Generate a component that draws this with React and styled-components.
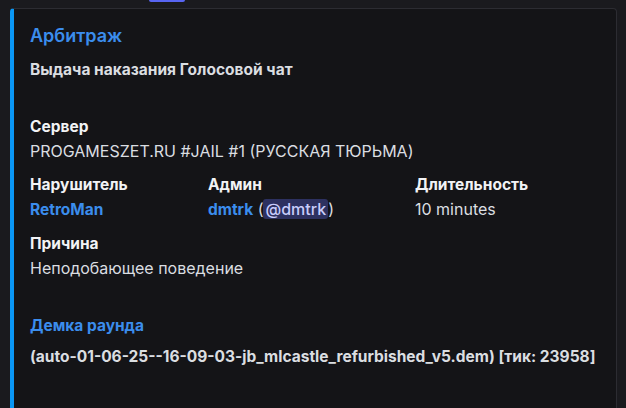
import React from 'react';
import styled, { createGlobalStyle } from 'styled-components';

const GlobalStyle = createGlobalStyle`
  html, body {
    margin: 0;
    padding: 0;
    background-color: #1a1a1e;
    overflow: hidden;
  }
  body {
    font-family: Inter, "Noto Sans", sans-serif;
    -webkit-font-smoothing: antialiased;
  }
`;

const Page = styled.div`
  width: 626px;
  height: 408px;
  background-color: #1a1a1e;
  overflow: hidden;
`;

// кусочек кнопки из предыдущего сообщения, торчит сверху
const TopStrip = styled.div`
  height: 8px;
  display: flex;
`;

const PrevButtonEdge = styled.div`
  margin-left: 149px;
  width: 36px;
  height: 2px;
  border-radius: 0 0 2px 2px;
  background-color: #5865f2;
`;

const Embed = styled.div`
  margin-left: 10px;
  width: 607px;
  height: 420px;
  background-color: #141417;
  border: 1px solid #2c2c32;
  border-left: 4px solid ${({ $accent }) => $accent};
  border-radius: 4px;
  padding: 15px 16px 0 16px;
  box-sizing: border-box;
`;

const Title = styled.div`
  font-size: 18px;
  font-weight: 600;
  line-height: 24px;
  color: #3b8ded;
`;

const Description = styled.div`
  margin-top: 10px;
  font-size: 15.5px;
  font-weight: 700;
  line-height: 24px;
  color: #dbdee1;
`;

const Fields = styled.div`
  margin-top: 33px;
  display: grid;
  grid-template-columns: 178px 207px 1fr;
  row-gap: 10px;
`;

const Field = styled.div`
  grid-column: ${({ $full }) => ($full ? '1 / -1' : 'auto')};
  min-width: 0;
`;

const FieldName = styled.div`
  font-size: 15.5px;
  font-weight: 700;
  line-height: 24px;
  color: #f2f3f5;
`;

const FieldValue = styled.div`
  font-size: 16px;
  font-weight: 400;
  line-height: 24px;
  color: #dbdee1;
  white-space: nowrap;
`;

const Link = styled.span`
  color: #3b8ded;
  font-weight: 700;
  font-size: 15.5px;
`;

const Mention = styled.span`
  background-color: #2d3160;
  color: #c9cdfb;
  border-radius: 3px;
  padding: 0 2px;
  font-weight: 500;
`;

const Demo = styled.div`
  margin-top: 34px;
`;

const DemoTitle = styled.div`
  font-size: 15.5px;
  font-weight: 700;
  line-height: 24px;
  color: #3b8ded;
`;

const DemoFile = styled.div`
  margin-top: 7px;
  font-size: 15.5px;
  font-weight: 700;
  line-height: 24px;
  color: #dbdee1;
  white-space: nowrap;
`;

export default function App() {
  return (
    <Page>
      <GlobalStyle />
      <TopStrip>
        <PrevButtonEdge />
      </TopStrip>
      <Embed $accent="#0a97f5">
        <Title>Арбитраж</Title>
        <Description>Выдача наказания Голосовой чат</Description>
        <Fields>
          <Field $full>
            <FieldName>Сервер</FieldName>
            <FieldValue>PROGAMESZET.RU #JAIL #1 (РУССКАЯ ТЮРЬМА)</FieldValue>
          </Field>
          <Field>
            <FieldName>Нарушитель</FieldName>
            <FieldValue><Link>RetroMan</Link></FieldValue>
          </Field>
          <Field>
            <FieldName>Админ</FieldName>
            <FieldValue>
              <Link>dmtrk</Link> (<Mention>@dmtrk</Mention>)
            </FieldValue>
          </Field>
          <Field>
            <FieldName>Длительность</FieldName>
            <FieldValue>10 minutes</FieldValue>
          </Field>
          <Field $full>
            <FieldName>Причина</FieldName>
            <FieldValue>Неподобающее поведение</FieldValue>
          </Field>
        </Fields>
        <Demo>
          <DemoTitle>Демка раунда</DemoTitle>
          <DemoFile>(auto-01-06-25--16-09-03-jb_mlcastle_refurbished_v5.dem) [тик: 23958]</DemoFile>
        </Demo>
      </Embed>
    </Page>
  );
}
